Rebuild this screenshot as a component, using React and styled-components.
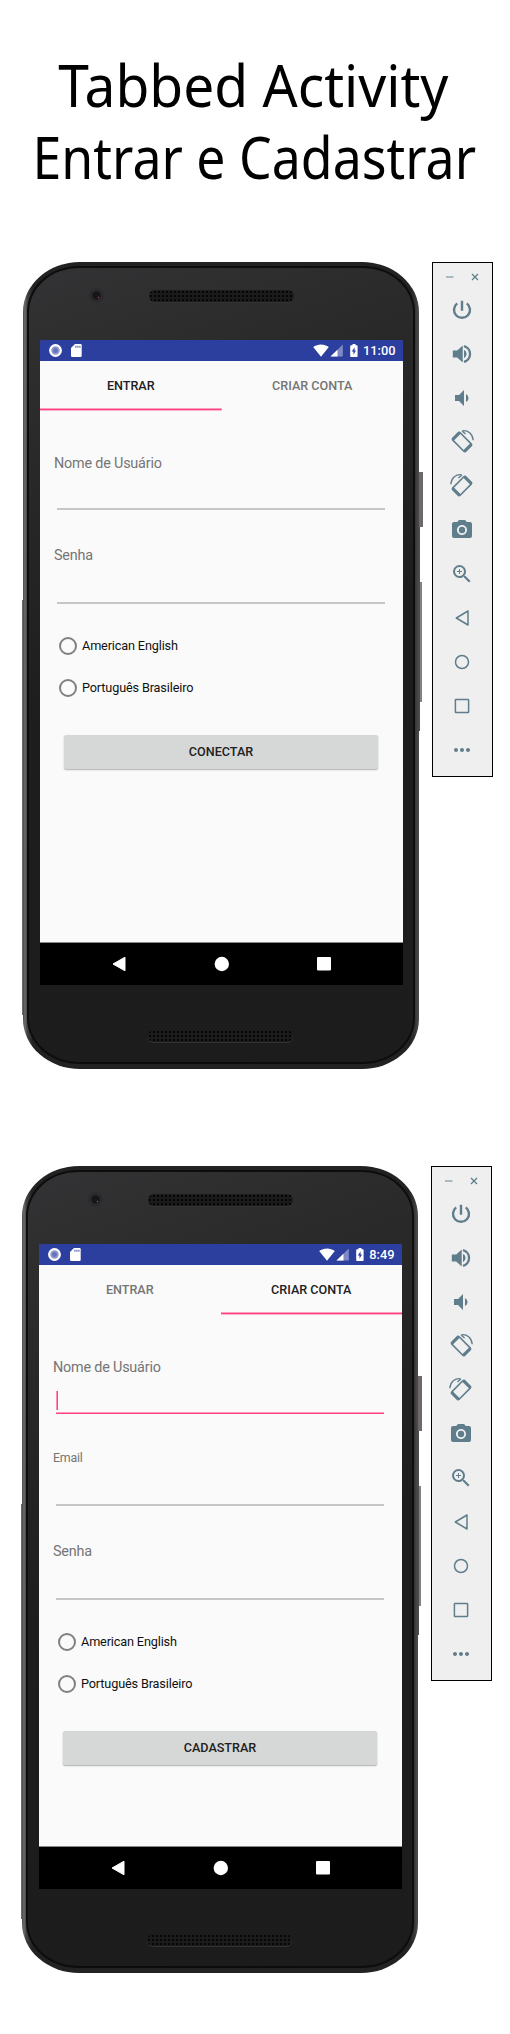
import React from 'react';
import styled, { createGlobalStyle, css } from 'styled-components';
import { MdVolumeDown, MdPhotoCamera, MdZoomIn, MdMoreHoriz } from 'react-icons/md';

const GlobalStyle = createGlobalStyle`
  * { box-sizing: border-box; }
  body { margin: 0; background: #fff; font-family: Roboto, "Liberation Sans", sans-serif; }
`;

const Page = styled.main`
  width: 510px;
  height: 2034px;
  overflow: hidden;
`;

const Title = styled.h1`
  margin: 0;
  padding-top: 49px;
  height: 262px;
  color: #000;
  font: 400 58px/72px "Noto Sans", "Open Sans", sans-serif;
  display: flex;
  flex-direction: column;
  align-items: center;
`;

const TitleLine = styled.span`
  white-space: nowrap;
  transform: translateX(${p => p.$shift}px) scaleX(${p => p.$stretch});
`;

const Showcase = styled.section`
  display: flex;
  align-items: flex-start;
  gap: 13px;
  margin-left: ${p => p.$left}px;
  margin-bottom: 97px;
`;

const Phone = styled.div`
  position: relative;
  width: 396px;
  height: 807px;
  padding: 4px 4px 5px;
  border-radius: 57px / 50px;
  background: linear-gradient(to right, #4a4a4a 0, #6c6c6c 2px, #444 4px, #222 10px, #222 387px, #333 392px, #4a4848 395px);
`;

const Bezel = styled.div`
  display: flex;
  flex-direction: column;
  align-items: center;
  height: 798px;
  border: 2px solid #0d0d0d;
  border-radius: 52px / 46px;
  background: linear-gradient(160deg, #333335 0%, #2a2a2a 18%, #1d1d1d 50%, #1c1c1d 100%);
`;

const SideKey = styled.i`
  position: absolute;
  top: ${p => p.$top}px;
  height: ${p => p.$height}px;
  width: ${p => p.$width}px;
  ${p => (p.$side === 'left' ? css`left: -1px;` : css`left: ${p.$x}px;`)}
  background: ${p => p.$tone || '#6d6969'};
`;

const Forehead = styled.div`
  align-self: stretch;
  height: 72px;
  padding: 20px 0 0 60px;
  display: flex;
  align-items: flex-start;
`;

const Lens = styled.i`
  width: 15px;
  height: 15px;
  margin: 0 45px 0 0;
  border-radius: 50%;
  background:
    radial-gradient(circle at 9.5px 9.5px, #6b4a5c 0 0.6px, transparent 1.2px),
    radial-gradient(circle, #17141c 0 3.5px, #2b2b2c 5px 7px, transparent 8px);
`;

const Speaker = styled.i`
  flex: none;
  width: 145px;
  height: 12px;
  margin-top: ${p => p.$top}px;
  margin-right: 2px;
  border-radius: 6px;
  background-color: #1b1b1b;
  background-image: radial-gradient(circle, #060606 0.9px, transparent 1.2px);
  background-size: 4px 4px;
  box-shadow: 0 1px 0 #333;
`;

const Screen = styled.div`
  width: 363px;
  height: 645px;
  flex: none;
  align-self: flex-start;
  margin-left: 11px;
  display: flex;
  flex-direction: column;
  background: #fafafa;
`;

const StatusBar = styled.div`
  height: 21px;
  padding: 0 7.5px 0 9px;
  display: flex;
  align-items: center;
  background: #2c3e9e;
  color: #fff;
  svg { display: block; flex: none; }
`;

const StatusGroup = styled.div`
  display: flex;
  align-items: center;
  gap: ${p => p.$gap}px;
  margin-left: ${p => (p.$end ? 'auto' : 0)};
`;

const Clock = styled.span`
  font-size: 12.8px;
  line-height: 21px;
  font-weight: 500;
  margin-left: ${p => p.$left}px;
`;

const Tabs = styled.div`
  display: grid;
  grid-template-columns: 1fr 1fr;
  height: 50px;
`;

const Tab = styled.div`
  display: flex;
  justify-content: center;
  padding-top: 15px;
  font-size: 12.6px;
  line-height: 20px;
  font-weight: 500;
  color: ${p => (p.$active ? '#212121' : '#757575')};
  background: ${p => (p.$active
    ? 'linear-gradient(#ff9dbf 1px, #ff4081 1px 2px, #ffb3cd 2px) bottom / 100% 3px no-repeat'
    : 'none')};
`;

const Form = styled.div`
  flex: 1;
  padding: 0 18px 0 14px;
  display: flex;
  flex-direction: column;
`;

const Field = styled.label`
  position: relative;
  display: block;
  height: ${p => p.$height}px;
  margin-top: ${p => p.$top}px;
  color: #757575;
  font-size: ${p => (p.$small ? 12.4 : 14.4)}px;
  line-height: ${p => (p.$small ? 20 : 22)}px;
  letter-spacing: -0.2px;
`;

const Underline = styled.span`
  position: absolute;
  left: 3px;
  right: 0;
  bottom: 0;
  height: 2px;
  background: ${p => (p.$focus ? 'linear-gradient(#ff9dbf 50%, #ff4081 50%)' : '#c6c6c6')};
`;

const Caret = styled.span`
  position: absolute;
  left: 3px;
  bottom: 4px;
  width: 2px;
  height: 19px;
  background: linear-gradient(to right, #ff8fb5 50%, #ff4081 50%);
`;

const Options = styled.div`
  display: flex;
  flex-direction: column;
  gap: 22.3px;
  margin-top: ${p => p.$top}px;
  padding-left: 5px;
`;

const Option = styled.div`
  display: flex;
  align-items: center;
  height: 20px;
  gap: 5px;
  color: #111;
  font-size: 12.7px;
  line-height: 20px;
  letter-spacing: -0.15px;
`;

const Ring = styled.i`
  width: 18px;
  height: 18px;
  border: 2px solid #808080;
  border-radius: 50%;
`;

const Action = styled.button`
  height: 34px;
  margin: ${p => p.$top}px 7px 0 10px;
  padding: 0;
  border: 0;
  border-radius: 2px;
  background: #d6d7d7;
  box-shadow: 0 1px 1.5px rgba(0, 0, 0, 0.3);
  color: #212121;
  font: 500 12.6px/34px Roboto, sans-serif;
`;

const NavBar = styled.div`
  height: 43px;
  border-top: 1px solid #8a8a8a;
  padding: 0 72px;
  display: flex;
  align-items: center;
  justify-content: space-between;
  background: #000;
  svg { display: block; }
`;

const Toolbar = styled.aside`
  width: 61px;
  height: 515px;
  border: 1px solid #000;
  background: #efefef;
  color: #607d8b;
  display: flex;
  flex-direction: column;
  align-items: center;
  svg { display: block; }
`;

const WindowKeys = styled.div`
  height: 25px;
  width: 100%;
  padding: 10px 13px 0 13px;
  display: flex;
  justify-content: space-between;
`;

const Tool = styled.div`
  width: 24px;
  height: 44px;
  margin-right: 1px;
  display: flex;
  align-items: center;
  justify-content: center;
`;

const PowerIcon = () => (
  <svg width="24" height="24" viewBox="0 0 24 24" fill="none" stroke="currentColor" strokeWidth="2.4">
    <path d="M12 2.800v10M7.200 5.400a8 8 0 1 0 9.600 0" />
  </svg>
);

const LoudIcon = () => (
  <svg width="24" height="24" viewBox="0 0 24 24">
    <path d="M2.800 8.600v6.800h4.400L12.700 20.600V3.400L7.200 8.600z" fill="currentColor" />
    <path d="M14 7.800a4.700 4.700 0 0 1 0 8.400z" fill="currentColor" />
    <path d="M14 4.200a8.050 8.050 0 0 1 0 15.600" fill="none" stroke="currentColor" strokeWidth="2.300" />
  </svg>
);

const RotateIcon = ({ mirrored }) => (
  <svg width="24" height="24" viewBox="0 0 24 24" fill="none" stroke="currentColor">
    <g transform={mirrored ? 'matrix(-1 0 0 1 24 0)' : undefined}>
      <g transform="rotate(-45 12 12)">
        <rect x="6.8" y="3" width="10.4" height="18" rx="1.2" strokeWidth="1.6" />
        <path d="M7 3.700h10M7 20.300h10" strokeWidth="3" />
      </g>
      <path d="M12 .9l3.600 3M12.200.8C18-.1 22.600 4 23.200 10.200" strokeWidth="1.300" />
    </g>
  </svg>
);

const line = { width: 24, height: 24, viewBox: '0 0 24 24', fill: 'none', stroke: 'currentColor', strokeWidth: 1.5, strokeLinejoin: 'round' };

const tools = [
  ['power', <PowerIcon />],
  ['louder', <LoudIcon />],
  ['quieter', <MdVolumeDown size={24} />],
  ['left', <RotateIcon />],
  ['right', <RotateIcon mirrored />],
  ['camera', <MdPhotoCamera size={24} />],
  ['zoom', <MdZoomIn size={24} />],
  ['back', <svg {...line}><path d="M18 5v14L6.3 12z" /></svg>],
  ['home', <svg {...line}><circle cx="12" cy="12" r="6.5" /></svg>],
  ['recent', <svg {...line}><rect x="5.4" y="5.4" width="13.2" height="13.2" rx=".6" /></svg>],
  ['more', <MdMoreHoriz size={24} />],
];

const EmulatorToolbar = () => (
  <Toolbar>
    <WindowKeys>
      <svg width="8" height="8"><path d="M0 4h7.5" stroke="#9db0b9" strokeWidth="1.7" /></svg>
      <svg width="8" height="8"><path d="M1 1l6 6M7 1L1 7" stroke="#607d8b" strokeWidth="1.3" /></svg>
    </WindowKeys>
    {tools.map(([name, icon]) => <Tool key={name}>{icon}</Tool>)}
  </Toolbar>
);

const StatusIcons = ({ time }) => (
  <StatusBar>
    <StatusGroup $gap={9}>
      <svg width="13" height="13">
        <circle cx="6.5" cy="6.5" r="6.4" fill="#fff" />
        <circle cx="6.5" cy="6.5" r="4.2" fill="#8e98ca" />
        <circle cx="6.5" cy="6.5" r="2.4" fill="#6673b8" />
      </svg>
      <svg width="11" height="13">
        <path d="M4 0h5.5Q10.700 0 10.700 1.200V11.800Q10.700 13 9.500 13H1.200Q0 13 0 11.800V4z" fill="#fff" />
        <path d="M4.300 2.700h1.200M6.300 2.700h1.200M8.300 2.700h1.200" stroke="#2c3e9e" strokeWidth="2" opacity=".75" />
      </svg>
    </StatusGroup>
    <StatusGroup $end $gap={0}>
      <svg width="16" height="13"><path d="M8 12.800L.2 3C4.500-.4 11.500-.4 15.800 3z" fill="#fff" /></svg>
      <svg width="14" height="13">
        <path d="M13.800.500V12.500H1.500z" fill="#7f8ac4" />
        <path d="M8.500 5.700V12.500H1.500z" fill="#fff" />
      </svg>
      <svg width="15" height="13">
        <path d="M9.500 0h3v1.300h1.300q.8 0 .8.800V12.200q0 .8-.8.800H8q-.8 0-.8-.8V2.100q0-.8.800-.8h1.500z" fill="#fff" />
        <path d="M11.600 3.200L8.800 7.600h1.700v3.200L13 6.500h-1.500z" fill="#2c3e9e" />
      </svg>
      <Clock $left={5.5}>{time}</Clock>
    </StatusGroup>
  </StatusBar>
);

const Device = ({ left, time, active, fields, optionsTop, actionTop, action }) => (
  <Showcase $left={left}>
    <Phone>
      <SideKey $side="left" $top={338} $height={415} $width={1} />
      <SideKey $x={396} $top={210} $height={55} $width={4} />
      <SideKey $x={396} $top={265} $height={204} $width={1} $tone="#4d4a4a" />
      <SideKey $x={397} $top={320} $height={120} $width={2} $tone="#858181" />
      <Bezel>
        <Forehead>
          <Lens />
          <Speaker $top={2} />
        </Forehead>
        <Screen>
          <StatusIcons time={time} />
          <Tabs>
            <Tab $active={active === 0}>ENTRAR</Tab>
            <Tab $active={active === 1}>CRIAR CONTA</Tab>
          </Tabs>
          <Form>
            {fields.map(f => (
              <Field key={f.label} $top={f.top} $height={f.height} $small={f.small}>
                {f.label}
                {f.focus && <Caret />}
                <Underline $focus={f.focus} />
              </Field>
            ))}
            <Options $top={optionsTop}>
              <Option><Ring />American English</Option>
              <Option><Ring />Português Brasileiro</Option>
            </Options>
            <Action $top={actionTop}>{action}</Action>
          </Form>
          <NavBar>
            <svg width="14" height="16"><path d="M13 1.200V14.800L1 8z" fill="#fff" stroke="#fff" strokeLinejoin="round" /></svg>
            <svg width="16" height="16"><circle cx="7.800" cy="8" r="7.200" fill="#fff" /></svg>
            <svg width="14" height="14"><rect width="14" height="13.500" rx="1" fill="#fff" /></svg>
          </NavBar>
        </Screen>
        <Speaker $top={45} />
      </Bezel>
    </Phone>
    <EmulatorToolbar />
  </Showcase>
);

export default function App() {
  return (
    <Page>
      <GlobalStyle />
      <Title>
        <TitleLine $shift={-2} $stretch={0.95}>Tabbed Activity</TitleLine>
        <TitleLine $shift={-1} $stretch={0.893}>Entrar e Cadastrar</TitleLine>
      </Title>
      <Device
        left={23}
        time="11:00"
        active={0}
        fields={[
          { label: 'Nome de Usuário', top: 42, height: 57 },
          { label: 'Senha', top: 35, height: 59 },
        ]}
        optionsTop={32}
        actionTop={37}
        action="CONECTAR"
      />
      <Device
        left={22}
        time="8:49"
        active={1}
        fields={[
          { label: 'Nome de Usuário', top: 42, height: 57, focus: true },
          { label: 'Email', top: 34, height: 58, small: true },
          { label: 'Senha', top: 35, height: 59 },
        ]}
        optionsTop={32}
        actionTop={37}
        action="CADASTRAR"
      />
    </Page>
  );
}
